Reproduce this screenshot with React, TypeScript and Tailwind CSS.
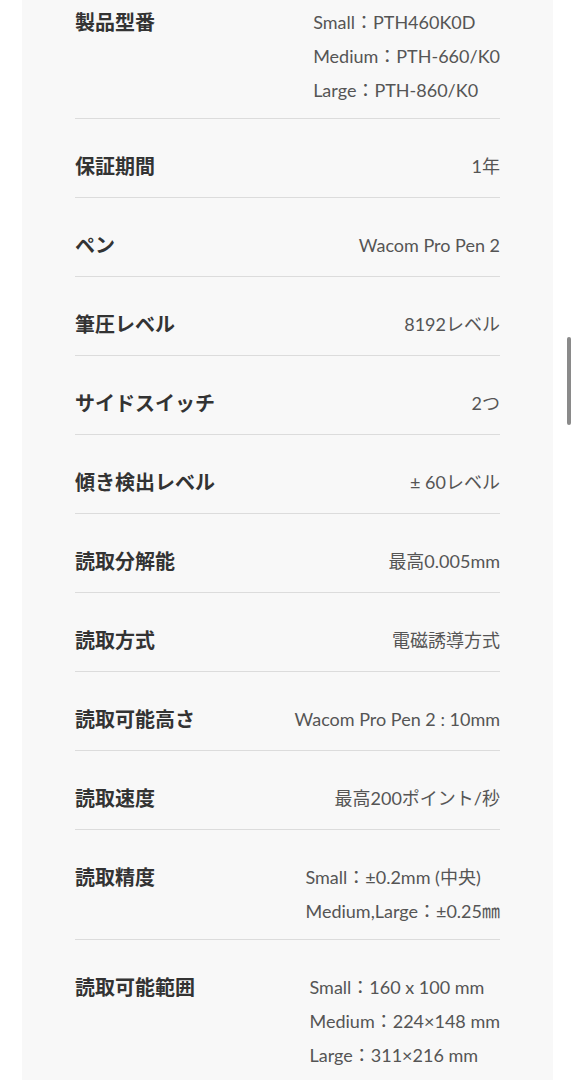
const specs: { label: string; values: string[] }[] = [
  {
    label: '製品型番',
    values: ['Small：PTH460K0D', 'Medium：PTH-660/K0', 'Large：PTH-860/K0'],
  },
  { label: '保証期間', values: ['1年'] },
  { label: 'ペン', values: ['Wacom Pro Pen 2'] },
  { label: '筆圧レベル', values: ['8192レベル'] },
  { label: 'サイドスイッチ', values: ['2つ'] },
  { label: '傾き検出レベル', values: ['± 60レベル'] },
  { label: '読取分解能', values: ['最高0.005mm'] },
  { label: '読取方式', values: ['電磁誘導方式'] },
  { label: '読取可能高さ', values: ['Wacom Pro Pen 2 : 10mm'] },
  { label: '読取速度', values: ['最高200ポイント/秒'] },
  { label: '読取精度', values: ['Small：±0.2mm (中央)', 'Medium,Large：±0.25㎜'] },
  {
    label: '読取可能範囲',
    values: ['Small：160 x 100 mm', 'Medium：224×148 mm', 'Large：311×216 mm'],
  },
]

export default function App() {
  return (
    <div className="relative h-[1080px] overflow-hidden bg-white">
      {/* Spec card */}
      <div className="ml-[22px] mr-[23px] h-full bg-[#f8f8f8] px-[53px]">
        {specs.map((spec, i) => (
          <SpecRow key={spec.label} spec={spec} first={i === 0} />
        ))}
      </div>

      {/* Scrollbar thumb */}
      <div className="absolute right-[5px] top-[337px] h-[88px] w-[4px] rounded-full bg-[#8a8a8a]" />
    </div>
  )
}

function SpecRow({
  spec,
  first,
}: {
  spec: { label: string; values: string[] }
  first: boolean
}) {
  return (
    <div
      className={
        first
          ? 'flex items-start justify-between border-b border-[#dcdcdc] pt-[5px] pb-[11px]'
          : 'flex items-start justify-between border-b border-[#dcdcdc] pt-[30px] pb-[11px]'
      }
    >
      <div className="font-['Noto_Sans_CJK_JP',sans-serif] text-[20px] font-bold leading-[34px] text-[#333] pb-[3px]">
        {spec.label}
      </div>
      <div className="font-['Lato','Noto_Sans_CJK_JP',sans-serif] text-[18px] leading-[34px] text-[#555]">
        {spec.values.map((v) => (
          <div key={v} className="whitespace-nowrap">
            {v}
          </div>
        ))}
      </div>
    </div>
  )
}
